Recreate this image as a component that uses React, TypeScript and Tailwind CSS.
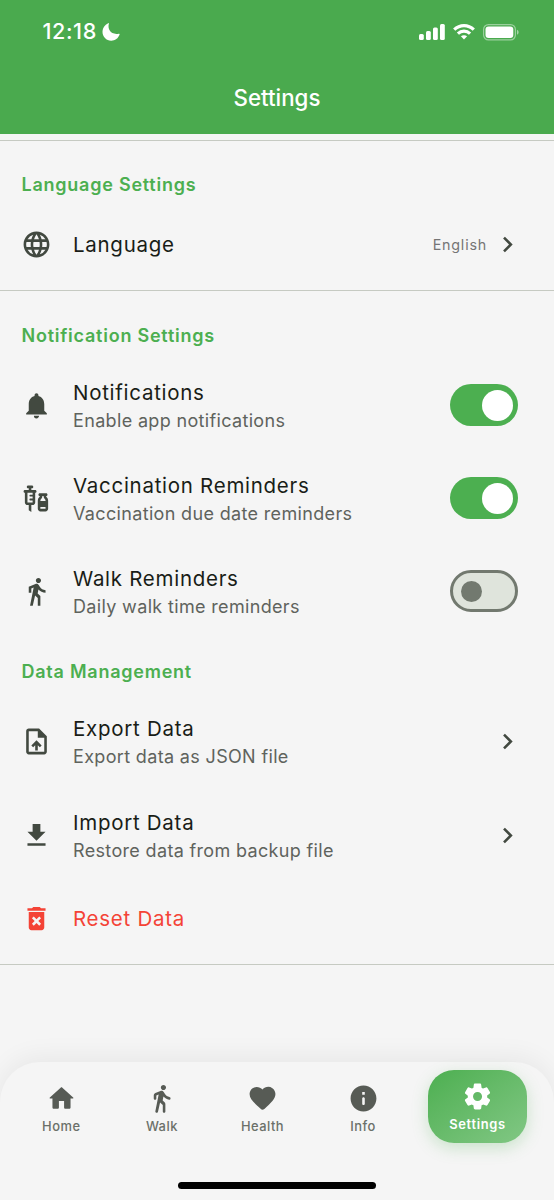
import { useState } from 'react';
import type { ReactNode } from 'react';
import {
  MdChevronRight,
  MdDeleteForever,
  MdDirectionsWalk,
  MdFileDownload,
  MdLanguage,
  MdNotifications,
  MdOutlineUploadFile,
  MdVaccines,
} from 'react-icons/md';

// Rounded material glyphs used by the bottom bar
const NAV_ITEMS = [
  {
    label: 'Home',
    path: 'M10 19v-5h4v5c0 .55.45 1 1 1h3c.55 0 1-.45 1-1v-7h1.7c.46 0 .68-.57.33-.87L12.67 3.6c-.38-.34-.96-.34-1.34 0l-8.36 7.53c-.34.3-.13.87.33.87H5v7c0 .55.45 1 1 1h3c.55 0 1-.45 1-1z',
  },
  {
    label: 'Walk',
    path: 'M13.5 5.5c1.1 0 2-.9 2-2s-.9-2-2-2-2 .9-2 2 .9 2 2 2zM9.8 8.9L7.24 21.81c-.13.61.35 1.19.98 1.19h.08c.47 0 .87-.32.98-.78L10.9 15l2.1 2v5c0 .55.45 1 1 1s1-.45 1-1v-5.64c0-.55-.22-1.07-.62-1.45L12.9 13.5l.6-3c1.07 1.24 2.62 2.13 4.36 2.41.6.09 1.14-.39 1.14-1 0-.49-.36-.9-.84-.98-1.53-.25-2.8-1.15-3.46-2.33l-1-1.6c-.4-.6-1-1-1.7-1-.3 0-.5.1-.8.1L7.22 7.78C6.48 8.1 6 8.82 6 9.62V12c0 .55.45 1 1 1s1-.45 1-1V9.6l1.8-.7',
  },
  {
    label: 'Health',
    path: 'M13.35 20.13c-.76.69-1.93.69-2.69-.01l-.11-.1C5.3 15.27 1.87 12.16 2 8.28c.06-1.7.93-3.33 2.34-4.29 2.64-1.8 5.9-.96 7.66 1.1 1.76-2.06 5.02-2.91 7.66-1.1 1.41.96 2.28 2.59 2.34 4.29.14 3.88-3.3 6.99-8.55 11.76l-.1.09z',
  },
  {
    label: 'Info',
    path: 'M12 2C6.48 2 2 6.48 2 12s4.48 10 10 10 10-4.48 10-10S17.52 2 12 2zm0 15c-.55 0-1-.45-1-1v-4c0-.55.45-1 1-1s1 .45 1 1v4c0 .55-.45 1-1 1zm1-8h-2V7h2v2z',
  },
  {
    label: 'Settings',
    path: 'M19.5 12c0-.23-.01-.45-.03-.68l1.86-1.41c.4-.3.51-.86.26-1.3l-1.87-3.23c-.25-.44-.79-.62-1.25-.42l-2.15.91c-.37-.26-.76-.49-1.17-.68l-.29-2.31c-.06-.5-.49-.88-.99-.88h-3.73c-.51 0-.94.38-1 .88l-.29 2.31c-.41.19-.8.42-1.17.68l-2.15-.91c-.46-.2-1-.02-1.25.42L2.41 8.62c-.25.44-.14.99.26 1.3l1.86 1.41c-.02.22-.03.44-.03.67s.01.45.03.68l-1.86 1.41c-.4.3-.51.86-.26 1.3l1.87 3.23c.25.44.79.62 1.25.42l2.15-.91c.37.26.76.49 1.17.68l.29 2.31c.06.5.49.88.99.88h3.73c.5 0 .93-.38.99-.88l.29-2.31c.41-.19.8-.42 1.17-.68l2.15.91c.46.2 1 .02 1.25-.42l1.87-3.23c.25-.44.14-.99-.26-1.3l-1.86-1.41c.03-.23.04-.45.04-.68zm-7.46 3.5c-1.93 0-3.5-1.57-3.5-3.5s1.57-3.5 3.5-3.5 3.5 1.57 3.5 3.5-1.57 3.5-3.5 3.5z',
  },
];

function StatusBar() {
  return (
    <div className="flex h-16 items-center justify-between pl-[42.5px] pr-9">
      <div className="flex items-center gap-[5px]">
        <span className="text-[21.6px] font-medium leading-none tracking-[0.6px]">12:18</span>
        <svg className="size-[18px]" viewBox="0 0 18 18" fill="currentColor">
          <path d="M6.9.6C5.2 6.4 9 12.2 16.8 10.7c.6-.1 1 .3.8.8C16.3 15.3 13 17.7 9.2 17.7 4.3 17.7.5 13.9.5 9.1.5 5.1 2.8 1.7 6.2.2c.5-.2.8 0 .7.4z" />
        </svg>
      </div>
      <div className="flex items-center">
        <svg className="h-[17px] w-[26px]" viewBox="0 0 26 17" fill="currentColor">
          <rect x="0" y="10" width="4.8" height="6" rx="1.5" />
          <rect x="7" y="7" width="4.8" height="9" rx="1.5" />
          <rect x="14" y="3.5" width="4.8" height="12.5" rx="1.5" />
          <rect x="21" y="0" width="4.8" height="16" rx="1.5" />
        </svg>
        <svg className="ml-2 h-[17px] w-[22px]" viewBox="0 0 22 17" fill="none" stroke="currentColor" strokeWidth="3.2">
          <path d="M1.2 5.7C6.8.3 15.2.3 20.8 5.7" />
          <path d="M4.9 9.6c3.5-3.3 8.7-3.3 12.2 0" />
          <path d="M7.9 12.3c1.8-1.5 4.4-1.5 6.2 0L11 15.6z" fill="currentColor" stroke="none" />
        </svg>
        <svg className="-mr-px ml-2 h-[17px] w-[36px]" viewBox="0 0 36 17" fill="none">
          <rect x="0.6" y="0.6" width="31.8" height="15.3" rx="4.8" stroke="#fff" strokeOpacity="0.45" strokeWidth="1.2" />
          <rect x="2.5" y="2.4" width="27.8" height="11.7" rx="3" fill="#fff" />
          <path d="M34 5.7v5c1-.4 1.6-1.4 1.6-2.5S35 6.1 34 5.7z" fill="#fff" fillOpacity="0.5" />
        </svg>
      </div>
    </div>
  );
}

function SectionTitle({ children }: { children: ReactNode }) {
  return <h2 className="px-[21.5px] text-[18px] font-semibold leading-[26px] tracking-[0.76px] text-[#4caf50]">{children}</h2>;
}

function Toggle({ on, onChange, label }: { on: boolean; onChange: () => void; label: string }) {
  return (
    <button
      role="switch"
      aria-checked={on}
      aria-label={label}
      onClick={onChange}
      className={`flex h-[42px] w-[68px] items-center rounded-full ${
        on ? 'justify-end bg-[#4caf50] pr-[5.5px]' : 'border-3 border-[#72796f] bg-[#dfe4dc] pl-[7.5px]'
      }`}
    >
      <span className={`rounded-full ${on ? 'size-[31px] bg-white' : 'size-[21px] bg-[#72796f]'}`} />
    </button>
  );
}

function Row({
  icon,
  title,
  subtitle,
  trailing,
  danger,
}: {
  icon: ReactNode;
  title: string;
  subtitle?: string;
  trailing?: ReactNode;
  danger?: boolean;
}) {
  return (
    <div className={`flex items-center pl-[21px] pr-9 ${subtitle ? 'h-[93.2px]' : 'h-[73px]'}`}>
      <span className={`w-[52px] text-[31px] ${danger ? 'text-[#f44336]' : 'text-[#424940]'}`}>{icon}</span>
      <div className="flex-1 pt-px">
        <p className={`text-[20.5px] leading-[30px] tracking-[0.72px] ${danger ? 'text-[#f44336]' : 'text-[#191d17]'}`}>{title}</p>
        {subtitle && <p className="text-[18px] leading-[26px] tracking-[0.34px] text-[#5f635d]">{subtitle}</p>}
      </div>
      {trailing}
    </div>
  );
}

const Chevron = () => <MdChevronRight className="-mr-[5px] size-[31px] text-[#424940]" />;

export default function App() {
  const [notifications, setNotifications] = useState(true);
  const [vaccination, setVaccination] = useState(true);
  const [walk, setWalk] = useState(false);
  const [active, setActive] = useState('Settings');

  return (
    <div className="flex h-[1200px] w-[554px] flex-col overflow-hidden bg-[#f5f5f5] font-[Inter,sans-serif]">
      <header className="h-[134px] shrink-0 bg-[#4aaa4e] text-white">
        <StatusBar />
        <h1 className="pt-[19px] text-center text-[22.3px] font-medium leading-[30px]">Settings</h1>
      </header>

      <main className="flex-1 pt-1.5">
        <section className="h-[151px] border-y border-[#c6cac2] pt-[31px]">
          <SectionTitle>Language Settings</SectionTitle>
          <div className="pt-[10px]">
            <Row
              icon={<MdLanguage />}
              title="Language"
              trailing={
                <div className="flex items-center gap-[5px]">
                  <span className="text-[14.3px] tracking-[0.8px] text-[#757575]">English</span>
                  <Chevron />
                </div>
              }
            />
          </div>
        </section>

        <section className="pt-8">
          <SectionTitle>Notification Settings</SectionTitle>
          <div className="pt-[9.5px]">
            <Row
              icon={<MdNotifications />}
              title="Notifications"
              subtitle="Enable app notifications"
              trailing={<Toggle label="Notifications" on={notifications} onChange={() => setNotifications(!notifications)} />}
            />
            <Row
              icon={<MdVaccines />}
              title="Vaccination Reminders"
              subtitle="Vaccination due date reminders"
              trailing={<Toggle label="Vaccination Reminders" on={vaccination} onChange={() => setVaccination(!vaccination)} />}
            />
            <Row
              icon={<MdDirectionsWalk />}
              title="Walk Reminders"
              subtitle="Daily walk time reminders"
              trailing={<Toggle label="Walk Reminders" on={walk} onChange={() => setWalk(!walk)} />}
            />
          </div>
        </section>

        <section className="border-b border-[#c6cac2] pb-[9px] pt-[21.4px]">
          <SectionTitle>Data Management</SectionTitle>
          <div className="pt-[9.8px]">
            <Row icon={<MdOutlineUploadFile />} title="Export Data" subtitle="Export data as JSON file" trailing={<Chevron />} />
            <Row icon={<MdFileDownload />} title="Import Data" subtitle="Restore data from backup file" trailing={<Chevron />} />
            <Row icon={<MdDeleteForever />} title="Reset Data" danger />
          </div>
        </section>
      </main>

      <nav className="flex h-[138px] shrink-0 flex-col items-center justify-between rounded-t-[40px] bg-[#f5f5f5] pb-[11px] pt-2 shadow-[0_-5px_26px_rgba(0,0,0,0.06)]">
        <div className="flex w-full items-start pl-[11px] pr-[27px]">
          {NAV_ITEMS.map((item) => {
            const selected = item.label === active;
            return (
              <button
                key={item.label}
                onClick={() => setActive(item.label)}
                className={`flex h-[73px] flex-col items-center rounded-[26px] ${
                  selected
                    ? 'ml-auto w-[99px] bg-linear-to-br from-[#4caf50] to-[#81c784] pt-[10.5px] text-white shadow-[0_5px_16px_rgba(76,175,80,0.25)]'
                    : 'w-[100.6px] pt-[13px] text-[#575b55]'
                }`}
              >
                <svg className="size-[31px]" viewBox="0 0 24 24" fill="currentColor">
                  <path d={item.path} />
                </svg>
                <span
                  className={`mt-1 text-[12.9px] leading-[17px] ${
                    selected ? 'font-semibold tracking-[0.7px]' : 'font-medium tracking-[0.5px] text-[#6b7069]'
                  }`}
                >
                  {item.label}
                </span>
              </button>
            );
          })}
        </div>
        <div className="h-[7px] w-[198px] rounded-full bg-black" />
      </nav>
    </div>
  );
}
